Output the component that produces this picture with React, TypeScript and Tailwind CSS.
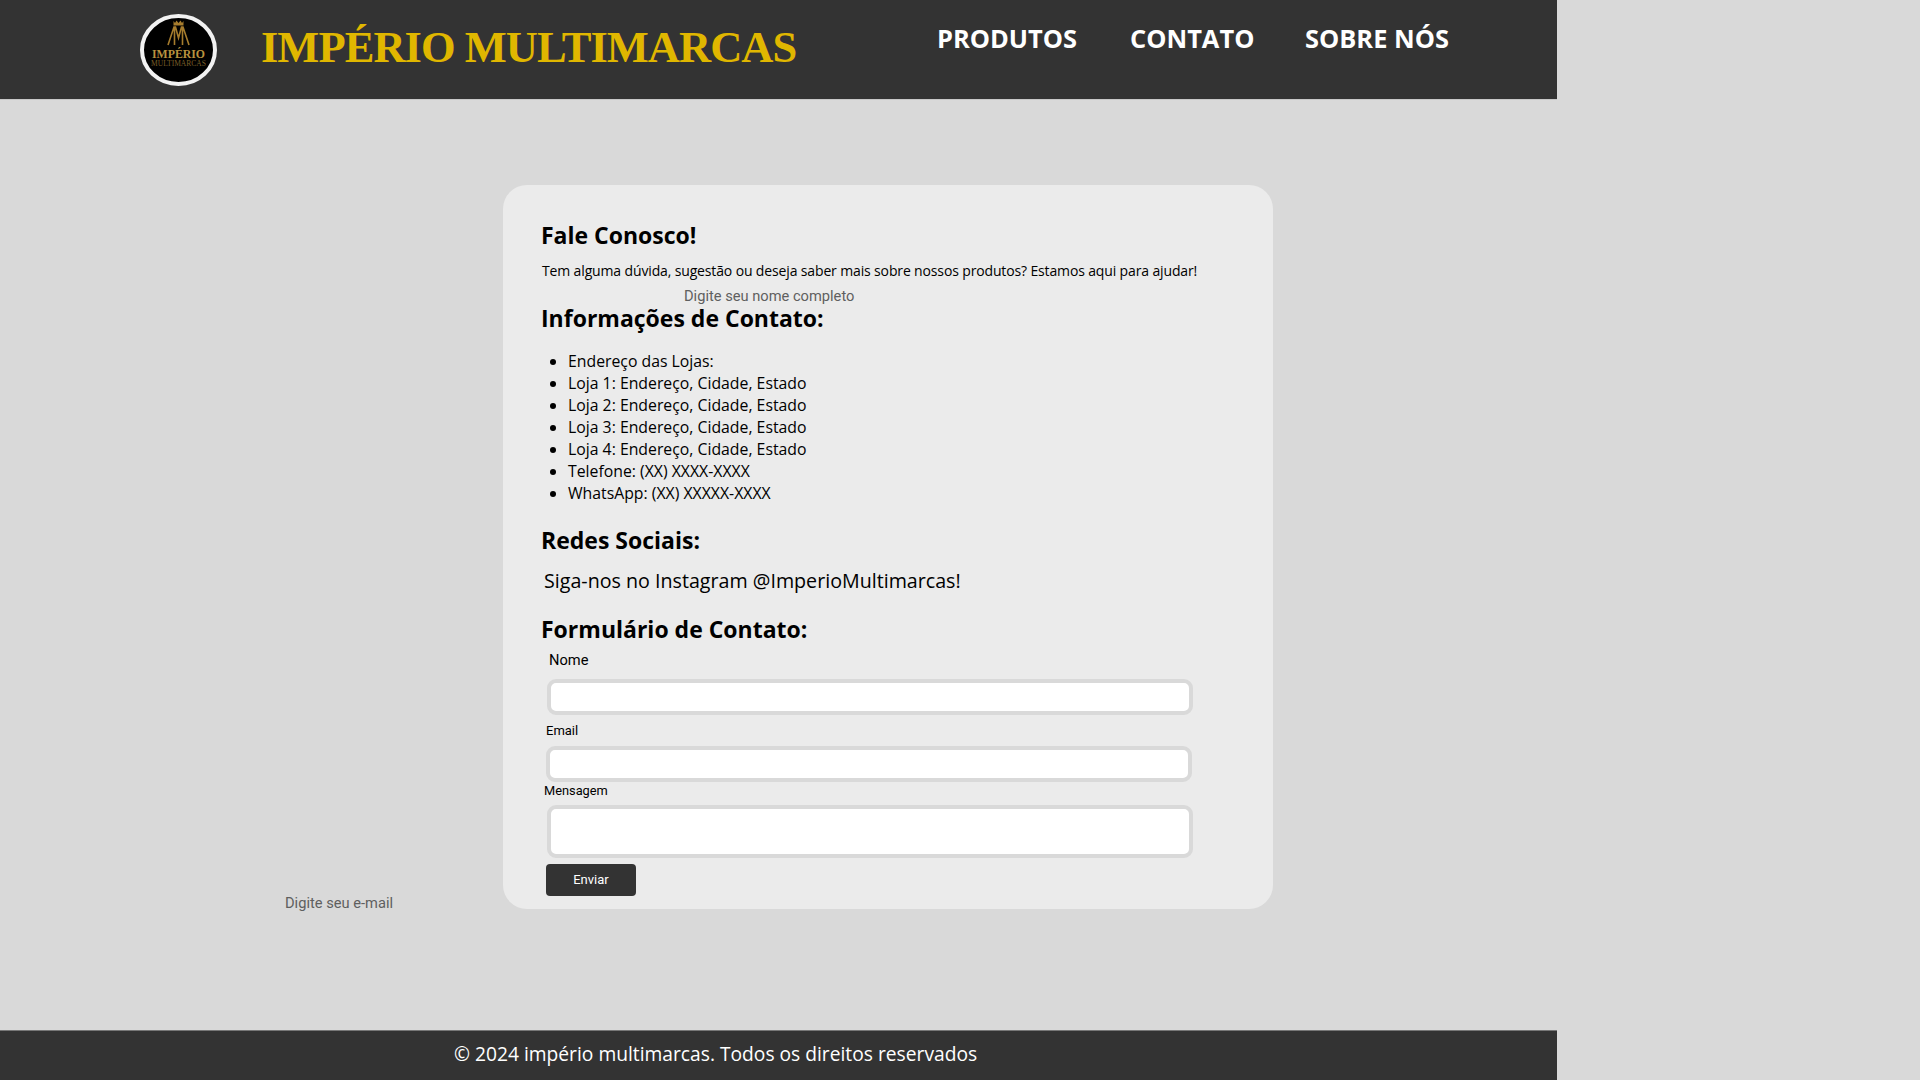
const lojas = [
  "Endereço das Lojas:",
  "Loja 1: Endereço, Cidade, Estado",
  "Loja 2: Endereço, Cidade, Estado",
  "Loja 3: Endereço, Cidade, Estado",
  "Loja 4: Endereço, Cidade, Estado",
  "Telefone: (XX) XXXX-XXXX",
  "WhatsApp: (XX) XXXXX-XXXX",
];

function Logo() {
  return (
    <svg viewBox="0 0 77 72" className="w-[77px] h-[72px] shrink-0">
      <ellipse cx="38.5" cy="36" rx="36.500" ry="34" fill="#000" stroke="#f2f2f2" strokeWidth="4" />
      {/* crown */}
      <path d="M33.500 7l1.500 2 1.500-2.500 2 2.500 2-2.500 1.500 2.500 1.500-2v4.500h-10z" fill="#a67c2d" />
      {/* monogram */}
      <path d="M28 31l6-18h1.500l3 11 3-11H43l6 18M34.500 13v18M42.500 13v18" fill="none" stroke="#a67c2d" strokeWidth="1.600" />
      <text x="38.500" y="44" textAnchor="middle" textLength="53" lengthAdjust="spacingAndGlyphs" fontFamily="Liberation Serif" fontWeight="700" fontSize="11.500" fill="#b8923f">IMPÉRIO</text>
      <text x="38.500" y="52" textAnchor="middle" textLength="55" lengthAdjust="spacingAndGlyphs" fontFamily="Liberation Serif" fontSize="7.500" fill="#7a5f28">MULTIMARCAS</text>
    </svg>
  );
}

function Heading({ children, className }: { children: React.ReactNode; className?: string }) {
  return <h2 className={`-ml-px text-[23px] leading-[32px] font-bold text-black ${className ?? ""}`}>{children}</h2>;
}

export default function App() {
  return (
    <div className="relative w-[1920px] h-[1080px] overflow-hidden flex flex-col bg-[#d9d9d9] font-['Open_Sans',sans-serif]">
      <header className="w-[1557px] h-[100px] shrink-0 flex items-start bg-[#333333] border-b border-[#c8c8c8] pl-[140px]">
        <div className="mt-[14px]"><Logo /></div>
        <div className="ml-[44px] mt-[19px] w-[536px] whitespace-nowrap font-['Liberation_Serif',serif] font-bold text-[44.500px] tracking-[-0.95px] leading-[56px] text-[#e0b700]">
          IMPÉRIO MULTIMARCAS
        </div>
        <nav className="ml-[140px] mt-[20px] flex text-[25.450px] leading-[36px] font-bold text-white">
          <a className="w-[193px]">PRODUTOS</a>
          <a className="w-[175px]">CONTATO</a>
          <a>SOBRE NÓS</a>
        </nav>
      </header>

      <main className="flex-1 pt-[85px] pl-[503px]">
        <section className="relative w-[770px] h-[724px] rounded-[24px] bg-[#ebebeb] pl-[39px] pt-[34px]">
          <Heading>Fale Conosco!</Heading>
          <p className="mt-[10px] text-[14px] tracking-[-0.14px] leading-[20px] text-black">
            Tem alguma dúvida, sugestão ou deseja saber mais sobre nossos produtos? Estamos aqui para ajudar!
          </p>
          <Heading className="mt-[21px]">Informações de Contato:</Heading>
          <ul className="mt-[16px] list-disc pl-[26px] text-[15.800px] leading-[22px] text-black">
            {lojas.map((l) => (
              <li key={l}>{l}</li>
            ))}
          </ul>
          <Heading className="mt-[20px]">Redes Sociais:</Heading>
          <p className="mt-[11px] ml-[2px] text-[19.660px] leading-[28px] text-black">Siga-nos no Instagram @ImperioMultimarcas!</p>
          <Heading className="mt-[18px]">Formulário de Contato:</Heading>

          <form className="font-['Roboto',sans-serif] text-black">
            <label className="block mt-[5px] ml-[7px] text-[14.670px] leading-[20px]">Nome</label>
            <input className="block mt-[9px] ml-[5px] w-[646px] h-[36px] rounded-[9px] border-[4px] border-[#d9d9d9] bg-white" />
            <label className="block mt-[7px] ml-[4px] text-[13px] leading-[18px]">Email</label>
            <input className="block mt-[6px] ml-[4px] w-[646px] h-[36px] rounded-[9px] border-[4px] border-[#d9d9d9] bg-white" />
            <label className="block mt-0 ml-[2px] text-[12.800px] leading-[18px]">Mensagem</label>
            <textarea className="block mt-[5px] ml-[5px] w-[646px] h-[53px] resize-none rounded-[9px] border-[4px] border-[#d9d9d9] bg-white" />
            <button type="button" className="block mt-[6px] ml-[4px] w-[90px] h-[32px] rounded-[4px] bg-[#333333] text-white text-[13px]">
              Enviar
            </button>
          </form>

          {/* stray placeholders from the original page */}
          <span className="absolute left-[181px] top-[101px] font-['Roboto',sans-serif] text-[14.670px] leading-[20px] text-[#5f5f5f]">
            Digite seu nome completo
          </span>
          <span className="absolute left-[-218px] top-[708px] font-['Roboto',sans-serif] text-[14.670px] leading-[20px] text-[#5f5f5f]">
            Digite seu e-mail
          </span>
        </section>
      </main>

      <footer className="w-[1557px] h-[50px] shrink-0 bg-[#333333] border-t border-[#777777] pl-[454px] pt-[9px] text-[19.230px] leading-[28px] text-white">
        © 2024 império multimarcas. Todos os direitos reservados
      </footer>
    </div>
  );
}
